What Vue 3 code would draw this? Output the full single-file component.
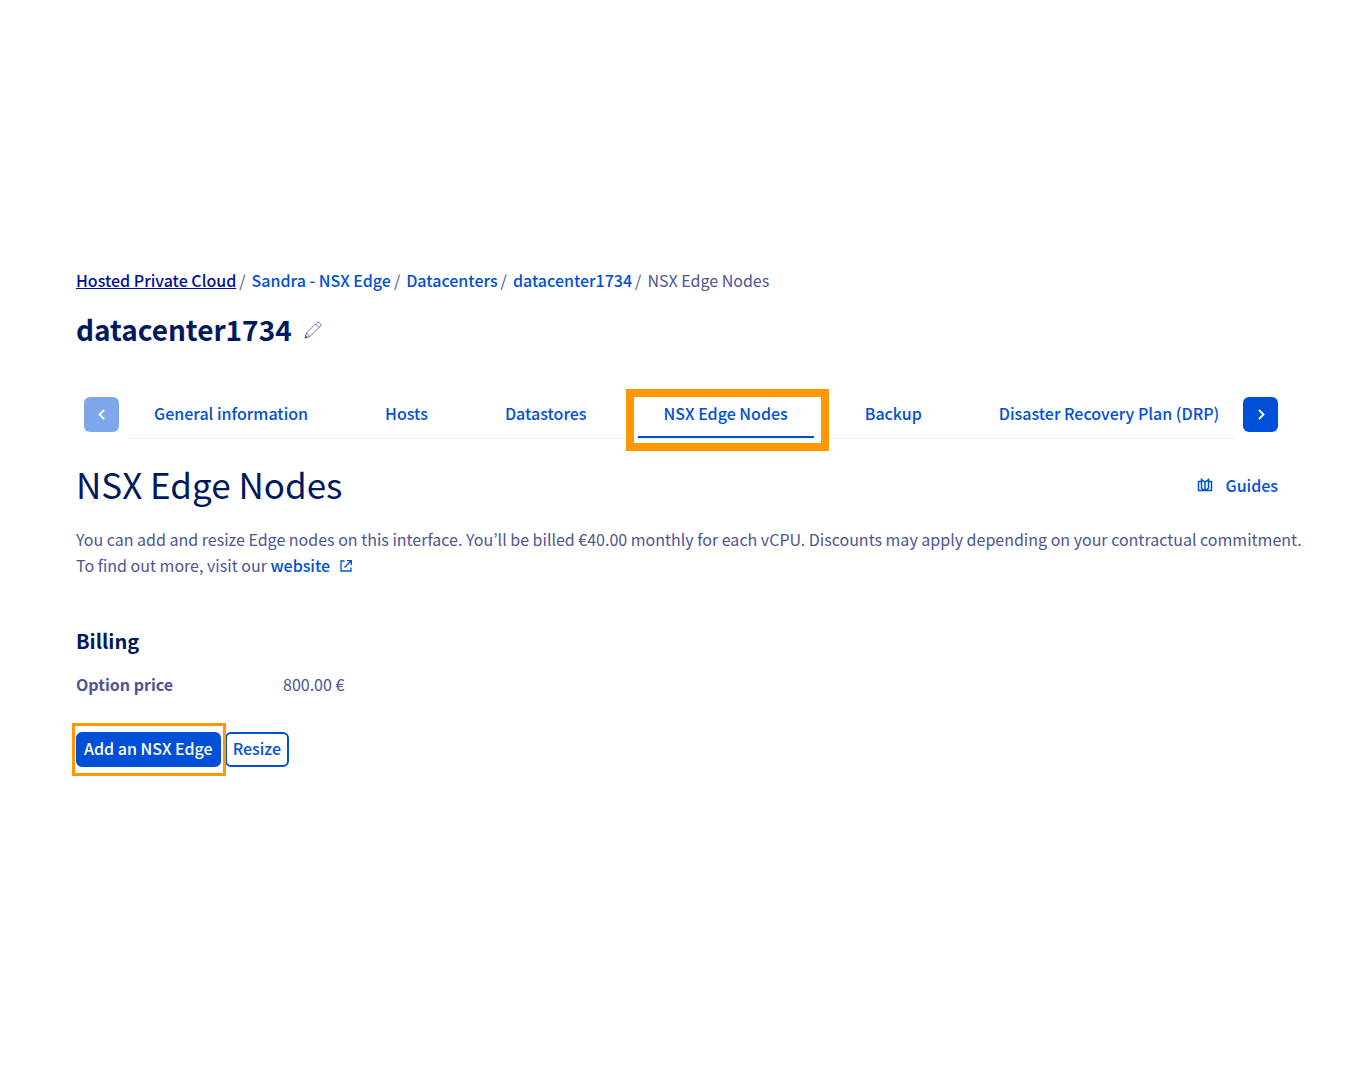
<script setup>
const crumbs = ['Hosted Private Cloud', 'Sandra - NSX Edge', 'Datacenters', 'datacenter1734']
const tabs = ['General information', 'Hosts', 'Datastores', 'NSX Edge Nodes', 'Backup', 'Disaster Recovery Plan (DRP)']
const active = 'NSX Edge Nodes'
</script>

<template>
  <main class="page">
    <nav class="crumbs" aria-label="Breadcrumb">
      <template v-for="(c, i) in crumbs" :key="c">
        <a href="#" :class="{ current: i === 0 }">{{ c }}</a><span class="slash">/</span>
      </template>
      <span>NSX Edge Nodes</span>
    </nav>

    <header class="title">
      <h1>datacenter1734</h1>
      <button class="edit" type="button" aria-label="Edit name">
        <svg width="18" height="18" viewBox="0 0 18 18" fill="none" stroke="#4d5592" stroke-width="0.800">
          <path d="M1 17l1.500-5L13 1.500q1-1 2 0l1.500 1.500q1 1 0 2L6 15.500zM11.500 3l3.500 3.500M2.500 12l3.500 3.500" />
          <path d="M.5 17.500l1-3.500L4 16.500z" fill="#4d5592" stroke="none" />
        </svg>
      </button>
    </header>

    <div class="tabbar">
      <button class="arrow" type="button" disabled aria-label="Previous tabs">
        <svg width="16" height="16" viewBox="0 0 16 16" fill="none" stroke="#fff" stroke-width="1.800"><path d="M10 3L5.500 7.500l4.500 4.500" /></svg>
      </button>
      <nav class="tabs">
        <a v-for="t in tabs" :key="t" href="#" class="tab" :class="{ active: t === active }">
          {{ t }}<span v-if="t === active" class="mark tab-mark"></span>
        </a>
      </nav>
      <button class="arrow" type="button" aria-label="Next tabs">
        <svg width="16" height="16" viewBox="0 0 16 16" fill="none" stroke="#fff" stroke-width="1.800"><path d="M6 3l4.500 4.500-4.500 4.500" /></svg>
      </button>
    </div>

    <div class="heading">
      <h2>NSX Edge Nodes</h2>
      <a href="#" class="guides">
        <svg width="16" height="14" viewBox="0 0 16 14" fill="none" stroke="#0050d7" stroke-width="1.500">
          <path d="M4 3.500H1.500v9h13v-9H12M8 12.500V4M8 4Q6.500 3.500 4.500 1.500v8.500Q6 12 8 12.500Q10 12 11.500 10V1.500Q9.500 3.500 8 4" />
        </svg>
        Guides
      </a>
    </div>

    <p class="intro">
      You can add and resize Edge nodes on this interface. You’ll be billed €40.00 monthly for each vCPU. Discounts may apply depending on your contractual commitment.<br>
      To find out more, visit our
      <a href="#">website<svg class="external" width="12" height="12" viewBox="0 0 12 12" fill="none" stroke="#0050d7" stroke-width="1.300"><path d="M4.500 1H1v10h10V7.500M7 .7h4.300V5M11 1L4.500 7.500" /></svg></a>
    </p>

    <section>
      <h3>Billing</h3>
      <dl class="price">
        <dt>Option price</dt>
        <dd>800.00 €</dd>
      </dl>
      <div class="actions">
        <div class="add">
          <button class="btn primary" type="button">Add an NSX Edge</button>
          <span class="mark add-mark"></span>
        </div>
        <button class="btn" type="button">Resize</button>
      </div>
    </section>
  </main>
</template>

<style>
body {
  margin: 0;
  background: #fff;
}
</style>

<style scoped>
.page {
  padding: 267px 48px 64px 76px;
  font: 400 16px/26px "Noto Sans CJK KR", "Noto Sans", sans-serif;
  color: #4d5592;
}
a {
  color: #0050d7;
  font-weight: 500;
  text-decoration: none;
}
button {
  font: inherit;
  cursor: pointer;
}
h1, h2, h3, p, dl, dd {
  margin: 0;
}
h1, h2, h3 {
  color: #00185e;
}
.crumbs {
  display: flex;
  flex-wrap: wrap;
}
.crumbs .current {
  color: #000e9c;
  text-decoration: underline;
}
.slash {
  margin: 0 6px 0 3px;
}
.title {
  display: flex;
  align-items: center;
  gap: 12px;
  margin-top: 16px;
}
h1 {
  font-size: 28px;
  line-height: 40px;
}
.edit {
  display: flex;
  padding: 2px 0 0;
  border: 0;
  background: none;
}
.tabbar {
  display: flex;
  align-items: flex-start;
  gap: 9px;
  margin-top: 48px;
  padding: 0 35px 0 8px;
}
.arrow {
  display: flex;
  flex: none;
  align-items: center;
  justify-content: center;
  width: 35px;
  height: 35px;
  padding: 0;
  border: 0;
  border-radius: 6px;
  background: #0050d7;
}
.arrow:disabled {
  opacity: 0.5;
}
.tabs {
  display: flex;
  flex: 1;
  gap: 25px;
  min-width: 0;
  border-bottom: 1px solid #e0f7ff;
}
.tab {
  position: relative;
  padding: 3px 26px 10px;
  border-bottom: 2px solid transparent;
  white-space: nowrap;
}
.tab:last-child {
  padding-right: 0;
}
.tab.active {
  border-bottom-color: #0050d7;
}
.mark {
  position: absolute;
  border: 3px solid #ff9800;
  pointer-events: none;
}
.tab-mark {
  inset: -8px -15px -15px -12px;
  border-width: 8px;
}
.heading {
  display: flex;
  align-items: center;
  justify-content: space-between;
  margin-top: 20px;
  padding-right: 35px;
}
h2 {
  font-size: 35px;
  line-height: 50px;
  font-weight: 400;
}
.guides {
  display: flex;
  align-items: center;
  gap: 12px;
  padding-top: 2px;
}
.intro {
  margin-top: 17px;
}
.external {
  margin-left: 10px;
}
h3 {
  margin-top: 47px;
  font-size: 20px;
  line-height: 32px;
}
.price {
  display: flex;
  margin-top: 14px;
}
.price dt {
  width: 207px;
  font-weight: 700;
}
.actions {
  display: flex;
  gap: 4px;
  margin-top: 35px;
}
.add {
  position: relative;
}
.btn {
  height: 35px;
  padding: 0 6px 3px;
  border: 2px solid #0050d7;
  border-radius: 6px;
  background: #fff;
  color: #0050d7;
  font-weight: 500;
  line-height: 26px;
}
.primary {
  background: #0050d7;
  color: #fff;
}
.add-mark {
  inset: -9px -5px -9px -4px;
}
</style>
